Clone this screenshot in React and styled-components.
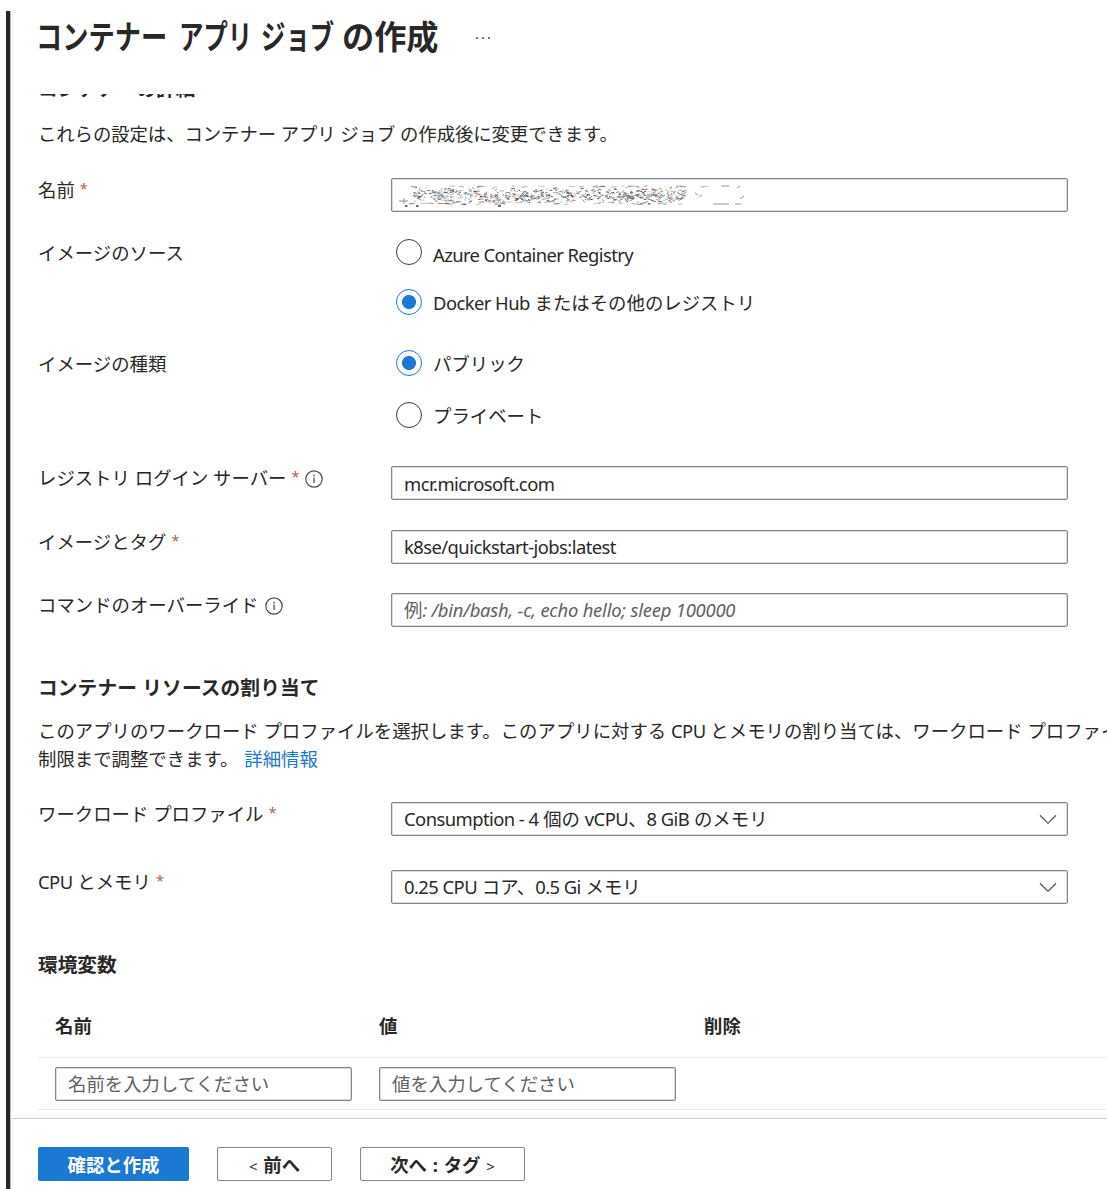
import React from 'react';
import styled, { createGlobalStyle } from 'styled-components';

const fields = {
    server: 'mcr.microsoft.com',
    image: 'k8se/quickstart-jobs:latest',
}

function InfoIcon() {
    return (
        <InfoSvg viewBox="0 0 18 18">
            <circle cx="9" cy="9" r="8.2" fill="none" stroke="#4a4a4a" strokeWidth="1.2" />
            <rect x="8.4" y="7.4" width="1.3" height="5.6" fill="#555" />
            <rect x="8.3" y="4.8" width="1.5" height="1.5" fill="#555" />
        </InfoSvg>
    );
}

function Chevron() {
    return (
        <svg width="18" height="11" viewBox="0 0 18 11">
            <path d="M1 1.2 L9 9.4 L17 1.2" fill="none" stroke="#5c5c5c" strokeWidth="1.3" />
        </svg>
    );
}

// value hidden by an eraser scribble, drawn from a fixed seed
function Scribble() {
    const colors = ['#555', '#888', '#999', '#aaa', '#5b9bd8', '#d0935f', '#3b3b55', '#6b4a4a'];
    let seed = 17;
    const rnd = () => {
        seed = (seed * 16807) % 2147483647;
        return seed / 2147483647;
    };
    const strokes = [];
    for (let i = 0; i < 620; i++) {
        const x = 14 + rnd() * 272;
        const y = 11.5 + (rnd() + rnd() - 1) * 8.5;
        const w = 1 + rnd() * 2.2;
        const dy = (rnd() - 0.5) * 3;
        strokes.push(<path key={i} d={`M${x} ${y} l${w} ${dy}`} stroke={colors[Math.floor(rnd() * 8)]} strokeWidth="0.9" />);
    }
    for (let i = 0; i < 80; i++) {
        const x = 10 + rnd() * 300;
        const y = rnd() > 0.5 ? 2 + rnd() : 18 + rnd() * 2.5;
        strokes.push(<path key={'e' + i} d={`M${x} ${y} l${2 + rnd() * 4} ${rnd() - 0.5}`} stroke={colors[Math.floor(rnd() * 4)]} strokeWidth="0.7" />);
    }
    return (
        <svg width="350" height="24" viewBox="0 0 350 24">
            {strokes}
            <path d="M0 17 H9 M5 14 V20 M296 9 l3 2 M300 13 l3 -2 M341 15 l4 -3 M336 20 h6 M338 4 l3 -2 M322 2 h8 M314 20 h16" fill="none" stroke="#888" strokeWidth="0.9" />
            <path d="M6 22 h2.5 M17 22 h2.5 M99 22 h3" stroke="#3b3b55" strokeWidth="1.3" />
        </svg>
    );
}

function Label({ children, required, info }) {
    return (
        <LabelText>
            {children}
            {required && <Star>*</Star>}
            {info && <InfoIcon />}
        </LabelText>
    );
}

function Radio({ children, checked, latin, shift }) {
    return (
        <RadioOption>
            <Circle $checked={checked} />
            <RadioText $latin={latin} $shift={shift}>{children}</RadioText>
        </RadioOption>
    );
}

export default function App() {
    return (
        <Page>
            <GlobalStyle />
            <Blade>
                <Header>
                    <Title>
                        <Word $width={143} $scale={0.795}>コンテナー</Word>
                        <Word $width={82} $scale={0.74}>アプリ</Word>
                        <Word $width={81} $scale={0.74}>ジョブ</Word>
                        <Word $width={96} $scale={0.975}>の作成</Word>
                    </Title>
                    <More><i /><i /><i /></More>
                </Header>
                <Content>
                    <CutHeading>コンテナーの詳細</CutHeading>
                    <Description>これらの設定は、コンテナー アプリ ジョブ の作成後に変更できます。</Description>

                    <Row $height={63}>
                        <Label required>名前</Label>
                        <Field><Scribble /></Field>
                    </Row>
                    <Row $height={111}>
                        <Label>イメージのソース</Label>
                        <RadioGroup $gap={24}>
                            <Radio latin shift={3}>Azure Container Registry</Radio>
                            <Radio checked shift={1}><Latin>Docker Hub</Latin> またはその他のレジストリ</Radio>
                        </RadioGroup>
                    </Row>
                    <Row $height={114}>
                        <Label>イメージの種類</Label>
                        <RadioGroup $gap={26}>
                            <Radio checked shift={1}>パブリック</Radio>
                            <Radio shift={1}>プライベート</Radio>
                        </RadioGroup>
                    </Row>
                    <Row $height={64}>
                        <Label required info>レジストリ ログイン サーバー</Label>
                        <Field><Latin>{fields.server}</Latin></Field>
                    </Row>
                    <Row $height={63}>
                        <Label required>イメージとタグ</Label>
                        <Field $raised><Latin>{fields.image}</Latin></Field>
                    </Row>
                    <Row $height={81}>
                        <Label info>コマンドのオーバーライド</Label>
                        <Field $muted $raised>例<Example>: /bin/bash, -c, echo hello; sleep 100000</Example></Field>
                    </Row>

                    <Heading>コンテナー リソースの割り当て</Heading>
                    <Paragraph>
                        このアプリのワークロード プロファイルを選択します。このアプリに対する <Latin>CPU</Latin> とメモリの割り当ては、ワークロード プロファイ
                        <br />
                        制限まで調整できます。 <Link>詳細情報</Link>
                    </Paragraph>
                    <Row $height={68}>
                        <Label required>ワークロード プロファイル</Label>
                        <Field $raised>
                            <span><Latin>Consumption - 4</Latin> 個の <Latin>vCPU</Latin>、<Latin>8 GiB</Latin> のメモリ</span>
                            <Chevron />
                        </Field>
                    </Row>
                    <Row $height={81}>
                        <Label required><Latin>CPU</Latin> とメモリ</Label>
                        <Field $raised>
                            <span><Latin>0.25 CPU</Latin> コア、<Latin>0.5 Gi</Latin> メモリ</span>
                            <Chevron />
                        </Field>
                    </Row>

                    <Heading $tall>環境変数</Heading>
                    <TableHead>
                        <span>名前</span>
                        <span>値</span>
                        <span>削除</span>
                    </TableHead>
                    <TableRow>
                        <Field $muted $raised>名前を入力してください</Field>
                        <Field $muted $raised>値を入力してください</Field>
                    </TableRow>
                </Content>
                <Footer>
                    <Button $primary $width={151}>確認と作成</Button>
                    <Button $width={115}><Angle>&lt;</Angle> 前へ</Button>
                    <Button $width={165}>次へ : タグ <Angle>&gt;</Angle></Button>
                </Footer>
            </Blade>
        </Page>
    );
}

const GlobalStyle = createGlobalStyle`
    * {
        box-sizing: border-box;
    }
    body {
        margin: 0;
        background-color: #ffffff;
        overflow: hidden;
    }
`

const Page = styled.div`
    width: 1107px;
    height: 1189px;
    padding: 11px 0 0 6px;
    overflow: hidden;
    font-family: 'Noto Sans', 'Noto Sans CJK JP', sans-serif;
    font-size: 18.4px;
    color: #292827;
`

const Blade = styled.div`
    height: 1178px;
    display: flex;
    flex-direction: column;
    border-left: 4px solid #252827;
    box-shadow: inset 1px 0 0 #bdbdbd;
`

const Header = styled.div`
    height: 83px;
    padding-left: 26px;
    display: flex;
    align-items: flex-start;
`

const Title = styled.h1`
    margin: 0;
    width: 439px;
    display: flex;
    font-size: 33px;
    line-height: 52px;
    font-weight: 700;
    white-space: nowrap;
`

// condensed kana, each word keeps its own slot
const Word = styled.span`
    flex: none;
    width: ${props => props.$width}px;
    transform: scaleX(${props => props.$scale});
    transform-origin: left center;
`

const More = styled.div`
    display: flex;
    gap: 4px;
    margin: 26px 0 0 1px;

    i {
        width: 2px;
        height: 2px;
        background-color: #777777;
    }
`

const Content = styled.div`
    height: 1024px;
    padding-left: 28px;
    overflow: hidden;
`

const CutHeading = styled.div`
    height: 24px;
    margin-top: -17px;
    font-size: 19.7px;
    line-height: 24px;
    font-weight: 700;
`

const Description = styled.div`
    height: 77px;
    padding-top: 19px;
    line-height: 28px;
    letter-spacing: -0.08px;
    white-space: nowrap;
`

const Row = styled.div`
    display: grid;
    grid-template-columns: 353px 677px;
    align-items: start;
    height: ${props => props.$height}px;
`

const LabelText = styled.div`
    display: flex;
    align-items: center;
    height: 24px;
    line-height: 24px;
    white-space: pre;
`

const Star = styled.span`
    margin: -5px 0 0 5px;
    font-size: 14.5px;
    color: #a8644c;
`

const InfoSvg = styled.svg`
    width: 18px;
    height: 18px;
    margin: 2px 0 0 6px;
`

const Latin = styled.span`
    letter-spacing: -0.55px;
`

const Example = styled.span`
    font-style: italic;
    letter-spacing: -0.2px;
`

const Field = styled.div`
    height: 34px;
    padding: ${props => props.$raised ? 0 : 2}px 10px 0 12px;
    display: flex;
    align-items: center;
    border: 1px solid #858585;
    border-radius: 2px;
    box-shadow: inset 0 0 0 1px #dcdcdc;
    line-height: 28px;
    white-space: pre;
    color: ${props => props.$muted ? '#63615f' : '#292827'};

    > svg {
        margin-left: auto;
    }
    > svg:only-child {
        margin-left: -5px;
    }
`

const RadioGroup = styled.div`
    display: flex;
    flex-direction: column;
    gap: ${props => props.$gap}px;
    padding: 0 0 0 5px;
    margin-top: -2px;
`

const RadioOption = styled.div`
    display: flex;
    align-items: center;
    height: 26px;
    gap: 11px;
`

const Circle = styled.span`
    width: 26px;
    height: 26px;
    flex: none;
    border-radius: 50%;
    border: 1.6px solid ${props => props.$checked ? '#1b78d3' : '#3a3a3a'};
    background: ${props => props.$checked ? 'radial-gradient(circle, #1b78d3 6.6px, #ffffff 7.4px)' : '#ffffff'};
`

const RadioText = styled.span`
    padding-top: ${props => props.$shift * 2}px;
    line-height: 24px;
    letter-spacing: ${props => props.$latin ? '-0.6px' : 'normal'};
`

const Heading = styled.h2`
    margin: 0;
    height: ${props => props.$tall ? 45 : 35}px;
    font-size: 19.7px;
    line-height: 28px;
    font-weight: 700;
    letter-spacing: ${props => props.$tall ? 'normal' : '0.12px'};
`

const Paragraph = styled.p`
    margin: 0;
    height: 93px;
    padding-top: 8px;
    line-height: 28px;
    white-space: nowrap;
`

const Link = styled.a`
    margin-left: 1px;
    color: #1b78d3;
`

const TableHead = styled.div`
    height: 62px;
    display: grid;
    grid-template-columns: 324px 325px 1fr;
    align-items: center;
    padding: 0 0 3px 17px;
    border-bottom: 1px solid #ececec;
    font-weight: 700;
`

const TableRow = styled.div`
    height: 52px;
    display: grid;
    grid-template-columns: 297px 297px;
    column-gap: 27px;
    padding: 9px 0 0 17px;
    border-bottom: 1px solid #e6e6e6;
`

const Footer = styled.div`
    flex: 1;
    display: flex;
    align-items: flex-start;
    gap: 28px;
    padding: 28px 0 0 28px;
    border-top: 1px solid #cfcfcf;
`

const Button = styled.button`
    width: ${props => props.$width}px;
    height: 34px;
    padding: 2px 0 0;
    border: 1px solid ${props => props.$primary ? '#1b78d3' : '#858585'};
    border-radius: 2px;
    background-color: ${props => props.$primary ? '#1b78d3' : '#ffffff'};
    color: ${props => props.$primary ? '#ffffff' : '#292827'};
    font-family: inherit;
    font-size: 18.4px;
    font-weight: 700;
    line-height: 28px;
    word-spacing: 1px;
    white-space: nowrap;
`

const Angle = styled.span`
    font-size: 15px;
    font-weight: 400;
`
